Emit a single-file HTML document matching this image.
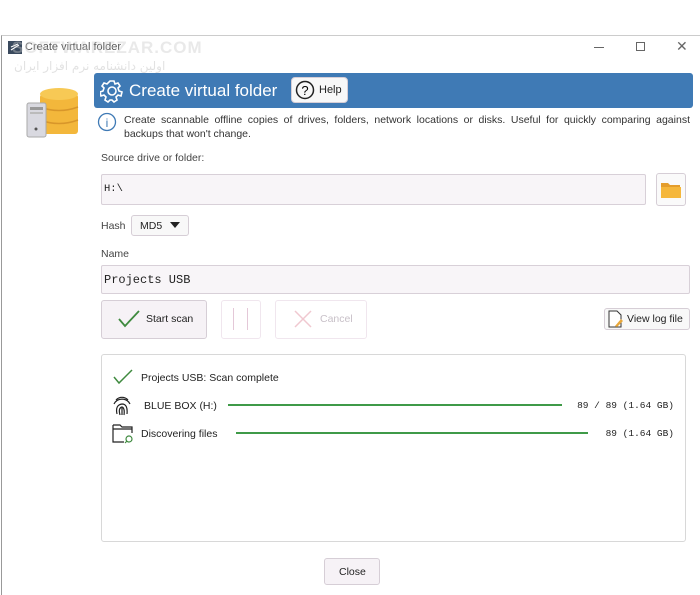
<!DOCTYPE html>
<html><head><meta charset="utf-8"><style>
*{box-sizing:border-box;margin:0;padding:0}
body{width:700px;height:595px;background:#fff;font-family:"Liberation Sans",sans-serif;font-size:10.5px;color:#222;position:relative;overflow:hidden}
.a{position:absolute}
.win{left:1px;top:35px;width:699px;height:560px;border-left:1px solid #999;border-top:1px solid #ccc}
.inp{background:#f8f5f8;border:1px solid #d8d0d8;border-radius:2px}
.btn{background:#f6f2f6;border:1px solid #d6ced6;border-radius:3px}
.mono{font-family:"Liberation Mono",monospace}
.bar{height:2px;background:#3f9a48}
.r{text-align:right}
</style></head><body>
<div class="a win"></div>
<svg class="a" style="left:8px;top:41px" width="14" height="13"><rect width="14" height="13" fill="#3a4a5e"/><path d="M3 9 L11 4 M3 6 L10 3" stroke="#fff" stroke-width="1.2"/></svg>
<div class="a" style="left:25px;top:41px;font-size:11px;color:#555">Create virtual folder</div>
<div class="a" style="left:12px;top:38px;font-size:17px;font-weight:bold;color:rgba(200,200,200,.4);letter-spacing:1px">SOFTWAREZAR.COM</div>
<div class="a" style="left:14px;top:59px;font-size:12px;color:rgba(190,190,190,.45);font-family:'DejaVu Sans',sans-serif">اولین دانشنامه نرم افزار ایران</div>
<div class="a" style="left:594px;top:47px;width:10px;height:1px;background:#666"></div>
<div class="a" style="left:636px;top:42px;width:9px;height:9px;border:1px solid #666"></div>
<div class="a" style="left:676px;top:38px;font-size:14px;color:#666">✕</div>
<svg class="a" style="left:26px;top:88px" width="54" height="50">
<g fill="#f3b73b"><rect x="14" y="6" width="38" height="40" rx="3"/><ellipse cx="33" cy="6" rx="19" ry="6" fill="#f7c955"/></g>
<path d="M14 19 Q33 26 52 19 M14 32 Q33 39 52 32" stroke="#d8962a" stroke-width="1.5" fill="none"/>
<rect x="1" y="15" width="19" height="34" rx="2" fill="#d9d9e0" stroke="#aaa"/><rect x="4" y="19" width="13" height="3" fill="#999"/><rect x="4" y="24" width="13" height="2" fill="#bbb"/><circle cx="10" cy="41" r="1.5" fill="#555"/>
</svg>
<div class="a" style="left:94px;top:73px;width:599px;height:35px;background:#3f7ab5;border-radius:3px"></div>
<svg class="a" style="left:100px;top:79px" width="24" height="24" fill="none" stroke="#fff" stroke-width="1.6"><circle cx="12" cy="12" r="4"/><path d="M10 2h4l1 3 3-1 2 3-2 2 1 3 3 1v0l-1 4-3-1-2 2 1 3-3 2-2-2-2 0-2 2-3-2 1-3-2-2-3 1-1-4 3-1 1-3-2-2 2-3 3 1z"/></svg>
<div class="a" style="left:129px;top:81px;color:#fff;font-size:17px">Create virtual folder</div>
<div class="a btn" style="left:291px;top:77px;width:57px;height:26px;background:#f8f8f8;border-radius:4px"></div>
<svg class="a" style="left:295px;top:80px" width="20" height="20"><circle cx="10" cy="10" r="8.5" fill="none" stroke="#222" stroke-width="1.5"/><text x="10" y="15" text-anchor="middle" font-size="13" font-family="Liberation Sans">?</text></svg>
<div class="a" style="left:319px;top:84px;font-size:11px">Help</div>
<svg class="a" style="left:97px;top:112px" width="20" height="20"><circle cx="10" cy="10" r="8.5" fill="none" stroke="#3f7ab5" stroke-width="1.3"/><text x="10" y="15" text-anchor="middle" font-size="12" fill="#3f7ab5" font-family="Liberation Sans">i</text></svg>
<div class="a" style="left:124px;top:113px;width:566px;font-size:10.5px;line-height:14px;text-align:justify;color:#333">Create scannable offline copies of drives, folders, network locations or disks. Useful for quickly comparing against backups that won't change.</div>
<div class="a" style="left:101px;top:152px;color:#444">Source drive or folder:</div>
<div class="a inp" style="left:101px;top:174px;width:545px;height:31px"></div>
<div class="a mono" style="left:104px;top:183px;font-size:10.5px">H:\</div>
<div class="a btn" style="left:656px;top:173px;width:30px;height:33px;background:#fafafa"></div>
<svg class="a" style="left:661px;top:181px" width="20" height="17"><path d="M0 2h7l2 2h10v13H0z" fill="#e49d2c"/><path d="M0 6h20v11H0z" fill="#f5b73c"/></svg>
<div class="a" style="left:101px;top:220px;color:#444">Hash</div>
<div class="a btn" style="left:131px;top:215px;width:58px;height:21px;background:#f8f8f8"></div>
<div class="a" style="left:140px;top:220px">MD5</div>
<div class="a" style="left:170px;top:222px;width:0;height:0;border-left:5px solid transparent;border-right:5px solid transparent;border-top:6px solid #222"></div>
<div class="a" style="left:101px;top:248px;color:#444">Name</div>
<div class="a inp" style="left:101px;top:265px;width:589px;height:29px"></div>
<div class="a mono" style="left:104px;top:273px;font-size:12px">Projects USB</div>
<div class="a btn" style="left:101px;top:300px;width:106px;height:39px"></div>
<svg class="a" style="left:117px;top:309px" width="24" height="20"><path d="M2 10l6 7L22 2" stroke="#3f8a3f" stroke-width="1.8" fill="none"/></svg>
<div class="a" style="left:146px;top:313px">Start scan</div>
<div class="a" style="left:221px;top:300px;width:40px;height:39px;border:1px solid #f0e6ee;border-radius:3px"></div>
<div class="a" style="left:233px;top:308px;width:1px;height:22px;background:#e4c8d8"></div>
<div class="a" style="left:247px;top:308px;width:1px;height:22px;background:#e4c8d8"></div>
<div class="a" style="left:275px;top:300px;width:92px;height:39px;border:1px solid #f0e6ee;border-radius:3px"></div>
<svg class="a" style="left:293px;top:309px" width="20" height="20"><path d="M2 2l16 16M18 2L2 18" stroke="#f0c8d0" stroke-width="1.5"/></svg>
<div class="a" style="left:320px;top:313px;color:#c8c0c8">Cancel</div>
<div class="a btn" style="left:604px;top:308px;width:86px;height:22px;background:#f8f8f8"></div>
<svg class="a" style="left:607px;top:310px" width="18" height="18"><path d="M2 1h8l4 4v12H2z" fill="#fff" stroke="#333"/><path d="M8 16l6-7 2 2-6 6z" fill="#e8a73a"/></svg>
<div class="a" style="left:627px;top:313px">View log file</div>
<div class="a" style="left:101px;top:354px;width:585px;height:188px;border:1px solid #d8d8d8;border-radius:3px"></div>
<svg class="a" style="left:113px;top:369px" width="20" height="16"><path d="M1 8l5 6L19 1" stroke="#3f8a3f" stroke-width="1.5" fill="none"/></svg>
<div class="a" style="left:141px;top:372px">Projects USB: Scan complete</div>
<svg class="a" style="left:112px;top:394px" width="20" height="22" fill="none" stroke="#222" stroke-width="1.2"><path d="M4 6a8 8 0 0 1 12 0M2 10a9 9 0 0 1 16 0M5 20q-2-9 5-10q6 0 5 10M8 21q-2-7 2-8q3 1 2 8M10 14v7"/></svg>
<div class="a" style="left:144px;top:400px">BLUE BOX (H:)</div>
<div class="a bar" style="left:228px;top:404px;width:334px"></div>
<div class="a mono r" style="left:560px;width:114px;top:400px;font-size:9.5px">89 / 89 (1.64 GB)</div>
<svg class="a" style="left:112px;top:422px" width="24" height="22" fill="none" stroke="#222" stroke-width="1.2"><path d="M1 3h7l2 2h10v6M1 3v17h11M1 7h19"/><circle cx="17" cy="17" r="3" stroke="#3f8a3f"/><path d="M15 19l-2 2" stroke="#3f8a3f"/></svg>
<div class="a" style="left:141px;top:428px">Discovering files</div>
<div class="a bar" style="left:236px;top:432px;width:352px"></div>
<div class="a mono r" style="left:560px;width:114px;top:428px;font-size:9.5px">89 (1.64 GB)</div>
<div class="a btn" style="left:324px;top:558px;width:56px;height:27px"></div>
<div class="a" style="left:339px;top:566px">Close</div>
</body></html>
